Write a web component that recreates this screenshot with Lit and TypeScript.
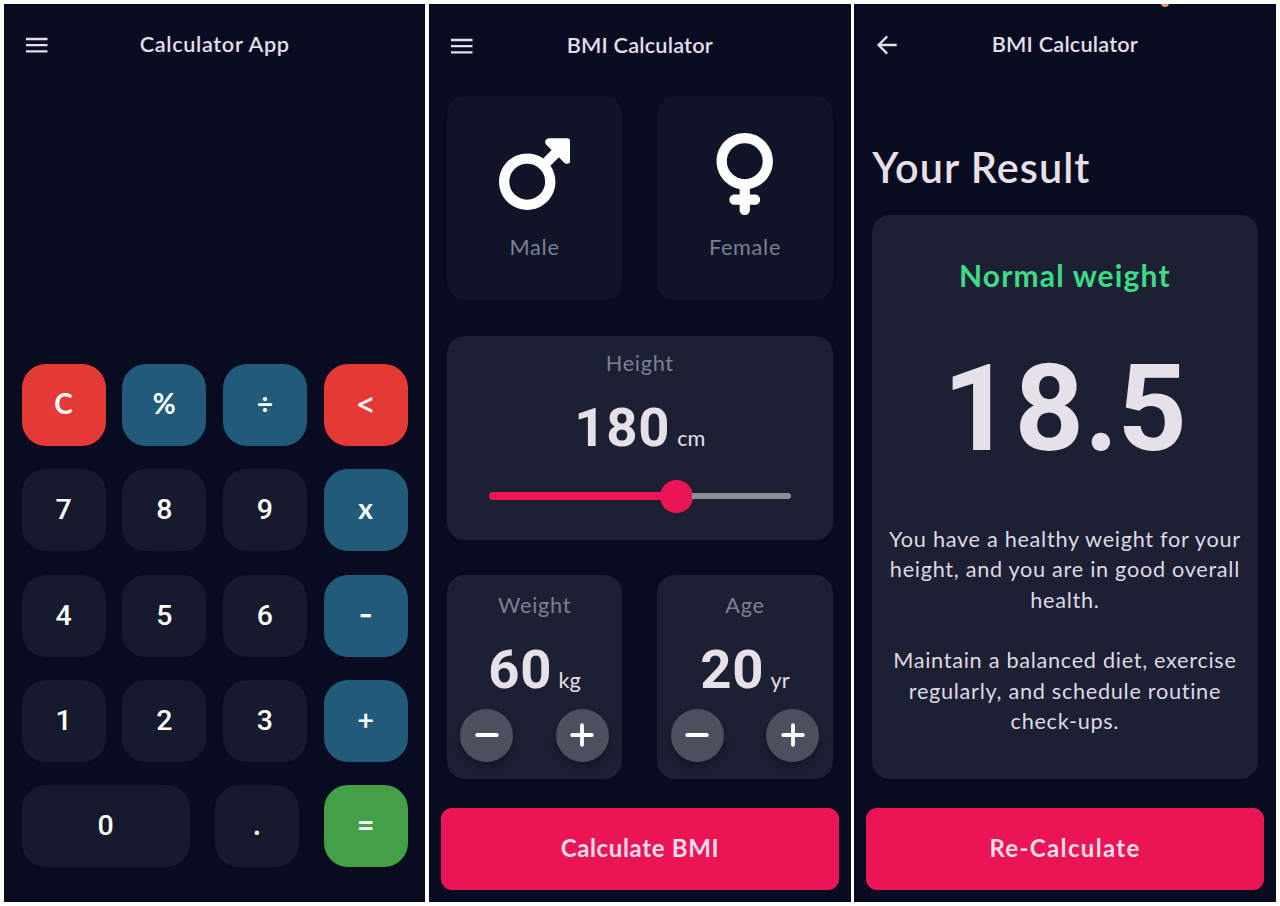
import { LitElement, html, css, svg } from "lit";
import { customElement, property } from "lit/decorators.js";
import { styleMap } from "lit/directives/style-map.js";

const base = css`
  * { box-sizing: border-box; }
  :host {
    display: flex;
    flex-direction: column;
    min-width: 0;
    background: #090b20;
    color: #e6e0e9;
    font-family: Lato, "Liberation Sans", sans-serif;
  }
  svg { display: block; }
  .cta {
    margin: 0 11.7px 11.6px 12px;
    height: 82px;
    border: 0;
    border-radius: 11px;
    background: #eb1555;
    color: #fbdce8;
    font: 700 24px/79px Lato, "Liberation Sans", sans-serif;
    letter-spacing: 0.65px;
    text-align: center;
    padding: 0 0 3px;
    flex: none;
  }
`;

@customElement("app-header")
class AppHeader extends LitElement {
  @property() title = "";
  @property() icon = "menu";
  static styles = css`
    :host { display: grid; grid-template-columns: 65px 1fr 65px; align-items: center; flex: none; }
    .icon { padding-left: 20px; }
    svg { display: block; }
    h1 { margin: 0; padding-bottom: 2px; font-size: 21.7px; font-weight: 600; line-height: 30px; text-align: center; white-space: nowrap; color: #e2dfea; letter-spacing: var(--title-spacing, 0.2px); }
  `;
  render() {
    return html`
      <div class="icon">
        <svg width="26" height="26" viewBox="0 0 26 26" fill="none" stroke="#e2dfea" stroke-width="2.3">
          ${this.icon === "menu"
            ? svg`<path d="M2 7H23.5M2 13.2H23.5M2 19.4H23.5" />`
            : svg`<path d="M22.7 13H5M13.2 4.4L4.6 13L13.2 21.6" />`}
        </svg>
      </div>
      <h1>${this.title}</h1>
    `;
  }
}

@customElement("calculator-screen")
class CalculatorScreen extends LitElement {
  static styles = [base, css`
    :host { padding-bottom: 34.2px; }
    app-header { height: 81px; --title-spacing: 0.65px; }
    .display { flex: 1; }
    .keys { display: flex; flex-direction: column; gap: 23.4px; padding: 0 17.7px 0 17.5px; }
    .row { display: flex; justify-content: space-between; }
    .key {
      width: 84.2px; height: 82px; padding: 0; border: 0; border-radius: 24px;
      background: #171a2c; color: #fff;
      font: 500 28.5px/80px Roboto, Inter, sans-serif;
      text-align: center;
    }
    .wide { width: 168.4px; }
    .red { background: #e53935; }
    .blue { background: #215b79; }
    .green { background: #43a047; }
    .sym { font-family: Lato, sans-serif; font-weight: 700; font-size: 28px; padding-bottom: 3px; line-height: 77px; }
    .op { font-family: Inter, sans-serif; font-weight: 500; font-size: 29px; padding-bottom: 4px; line-height: 76px; }
    .minus { font-size: 31px; font-weight: 600; }
  `];
  private rows = [
    [["C", "red sym"], ["%", "blue sym"], ["÷", "blue op"], ["<", "red op"]],
    [["7", ""], ["8", ""], ["9", ""], ["x", "blue sym"]],
    [["4", ""], ["5", ""], ["6", ""], ["-", "blue op minus"]],
    [["1", ""], ["2", ""], ["3", ""], ["+", "blue op"]],
    [["0", "wide"], [".", "sym"], ["=", "green op"]],
  ];
  render() {
    return html`
      <app-header title="Calculator App"></app-header>
      <div class="display"></div>
      <div class="keys">
        ${this.rows.map((r) => html`<div class="row">
          ${r.map(([t, c]) => html`<button class="key ${c}">${t}</button>`)}
        </div>`)}
      </div>
    `;
  }
}

@customElement("counter-card")
class CounterCard extends LitElement {
  @property() label = "";
  @property() value = "";
  @property() unit = "";
  static styles = css`
    :host { display: flex; flex-direction: column; background: #1d1f33; border-radius: 18px; padding: 15px 13.5px 0; }
    .label { font-size: 21.7px; line-height: 30px; text-align: center; color: #7d7f93; letter-spacing: 0.7px; }
    .reading { display: flex; justify-content: center; align-items: baseline; margin-top: 17px; line-height: 64px; height: 64px; }
    .num { font: 700 54.5px/64px Roboto, Inter, sans-serif; letter-spacing: 0.6px; }
    .unit { font-size: 21.7px; margin-left: 6.5px; }
    .buttons { display: flex; justify-content: space-between; margin-top: 8px; }
    .round { width: 53px; height: 53px; border: 0; padding: 0; border-radius: 50%; background: #4c4f5e; display: grid; place-items: center; box-shadow: 0 5px 8px rgba(0, 0, 0, 0.3); }
    svg { display: block; }
  `;
  render() {
    return html`
      <div class="label">${this.label}</div>
      <div class="reading"><span class="num">${this.value}</span><span class="unit">${this.unit}</span></div>
      <div class="buttons">
        ${["M3.2 13H22.8", "M3.2 13H22.8M13 3.2V22.8"].map((d) => html`<button class="round">
          <svg width="26" height="26" viewBox="0 0 26 26" fill="none" stroke="#fff" stroke-width="3.8" stroke-linecap="round"><path d=${d} /></svg>
        </button>`)}
      </div>
    `;
  }
}

@customElement("bmi-screen")
class BmiScreen extends LitElement {
  static styles = [base, css`
    app-header { height: 83.4px; margin-bottom: 8.8px; }
    .body { display: flex; flex-direction: column; gap: 35.4px; padding: 0 17.8px; flex: 1; }
    .pair { display: grid; grid-template-columns: 1fr 1fr; gap: 35px; height: 204px; }
    .gender { background: #111327; border-radius: 18px; display: flex; flex-direction: column; align-items: center; padding-top: 37.3px; }
    .label { font-size: 21.7px; line-height: 30px; text-align: center; color: #7d7f93; letter-spacing: 0.7px; }
    .gender .label { margin-top: 16.4px; }
    .height { background: #1d1f33; border-radius: 18px; height: 204px; padding: 12.6px 42px 0; }
    .reading { display: flex; justify-content: center; align-items: baseline; margin-top: 17px; height: 64px; }
    .num { font: 700 54.5px/64px Roboto, Inter, sans-serif; letter-spacing: 0.7px; }
    .unit { font-size: 21.7px; margin-left: 7px; }
    .slider { display: flex; align-items: center; margin-top: 20.4px; height: 33px; }
    .on { height: 8px; border-radius: 4px 0 0 4px; background: #eb1555; margin-right: -1px; }
    .thumb { width: 33px; height: 33px; border-radius: 50%; background: #eb1555; flex: none; }
    .off { flex: 1; height: 5.4px; border-radius: 0 3px 3px 0; background: #8d8e98; margin-left: -1px; }
  `];
  private progress = 57;
  render() {
    return html`
      <app-header title="BMI Calculator"></app-header>
      <div class="body">
        <div class="pair">
          <div class="gender">
            <svg width="71.8" height="82" viewBox="0 0 448 512" fill="#fff"><path d="M289.8 46.8c3.7-9 12.5-14.8 22.2-14.8H424c13.3 0 24 10.7 24 24V168c0 9.7-5.8 18.5-14.8 22.2s-19.3 1.7-26.2-5.2l-33.4-33.4L321 204.2c19.5 28.4 31 62.7 31 99.8c0 97.2-78.8 176-176 176S0 401.2 0 304s78.8-176 176-176c37 0 71.4 11.4 99.8 31l52.6-52.6L295 73c-6.9-6.9-8.9-17.2-5.2-26.2zM176 416a112 112 0 1 0 0-224 112 112 0 1 0 0 224z" /></svg>
            <div class="label">Male</div>
          </div>
          <div class="gender">
            <svg width="61.5" height="82" viewBox="0 0 384 512" fill="#fff"><path d="M80 176a112 112 0 1 1 224 0A112 112 0 1 1 80 176zM224 349.1c81.9-15 144-86.8 144-173.1C368 78.8 289.2 0 192 0S16 78.8 16 176c0 86.3 62.1 158.1 144 173.1V384H128c-17.7 0-32 14.3-32 32s14.3 32 32 32h32v32c0 17.7 14.3 32 32 32s32-14.3 32-32V448h32c17.7 0 32-14.3 32-32s-14.3-32-32-32H224V349.1z" /></svg>
            <div class="label">Female</div>
          </div>
        </div>
        <div class="height">
          <div class="label">Height</div>
          <div class="reading"><span class="num">180</span><span class="unit">cm</span></div>
          <div class="slider">
            <div class="on" style=${styleMap({ width: this.progress + "%" })}></div>
            <div class="thumb"></div>
            <div class="off"></div>
          </div>
        </div>
        <div class="pair">
          <counter-card label="Weight" value="60" unit="kg"></counter-card>
          <counter-card label="Age" value="20" unit="yr"></counter-card>
        </div>
      </div>
      <button class="cta">Calculate BMI</button>
    `;
  }
}

@customElement("result-screen")
class ResultScreen extends LitElement {
  static styles = [base, css`
    :host { position: relative; overflow: hidden; }
    .dot { position: absolute; left: 307px; top: -5px; width: 8px; height: 8px; border-radius: 50%; background: #e8915a; }
    app-header { height: 81px; }
    h2 { margin: 54px 0 0 18px; font-size: 41.3px; font-weight: 600; line-height: 56px; color: #e6e0e9; letter-spacing: 1.1px; white-space: nowrap; }
    .card { margin: 20px 17.8px 0; height: 564px; border-radius: 18px; background: #1d1f33; text-align: center; padding-top: 40px; }
    .status { font-size: 30px; font-weight: 700; line-height: 40px; color: #3bdc86; letter-spacing: 1.15px; }
    .score { display: flex; justify-content: center; align-items: baseline; margin-top: 37px; height: 144px; font: 700 121px/144px Roboto, Inter, sans-serif; letter-spacing: 2.4px; }
    .score span:last-child { letter-spacing: 0; }
    .point { font-family: Lato, sans-serif; }
    .advice { margin: 48px 0 0; font-size: 21.7px; line-height: 30.33px; letter-spacing: 0.7px; white-space: pre-line; color: #dedae4; }
    .cta { margin-top: auto; letter-spacing: 1.35px; }
  `];
  render() {
    return html`
      <div class="dot"></div>
      <app-header title="BMI Calculator" icon="back"></app-header>
      <h2>Your Result</h2>
      <div class="card">
        <div class="status">Normal weight</div>
        <div class="score"><span>18</span><span class="point">.</span><span>5</span></div>
        <p class="advice">${"You have a healthy weight for your\nheight, and you are in good overall\nhealth.\n\nMaintain a balanced diet, exercise\nregularly, and schedule routine\ncheck-ups."}</p>
      </div>
      <button class="cta">Re-Calculate</button>
    `;
  }
}

@customElement("app-root")
class AppRoot extends LitElement {
  static styles = css`
    :host {
      box-sizing: border-box;
      display: grid;
      grid-template-columns: repeat(3, 1fr);
      gap: 3.7px;
      width: 1280px;
      height: 906px;
      padding: 4px 4.4px 4.4px 4px;
      background: #fff;
    }
  `;
  render() {
    return html`
      <calculator-screen></calculator-screen>
      <bmi-screen></bmi-screen>
      <result-screen></result-screen>
    `;
  }
}
